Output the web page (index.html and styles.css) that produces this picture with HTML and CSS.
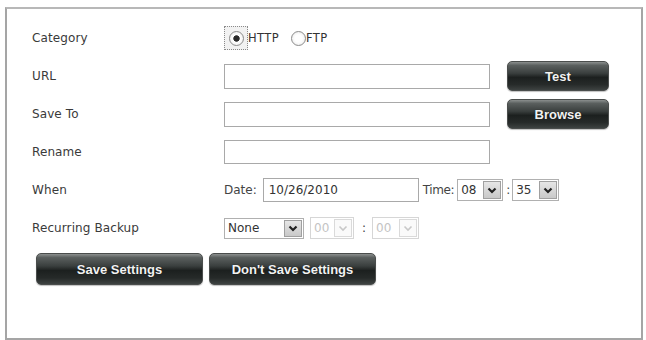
FILE: index.html
```html
<!DOCTYPE html>
<html>
<head>
<meta charset="utf-8">
<link rel="stylesheet" href="styles.css">
</head>
<body>
<div class="panel">
  <div class="form">
    <div class="label">Category</div>
    <div class="ctrl">
      <span class="focusbox"><span class="radio checked"></span></span><span class="rtext">HTTP</span>
      <span class="radio second"></span><span class="rtext">FTP</span>
    </div>

    <div class="label">URL</div>
    <div class="ctrl"><span class="input wide"></span><span class="btn small">Test</span></div>

    <div class="label">Save To</div>
    <div class="ctrl"><span class="input wide"></span><span class="btn small">Browse</span></div>

    <div class="label">Rename</div>
    <div class="ctrl"><span class="input wide short"></span></div>

    <div class="label">When</div>
    <div class="ctrl">
      <span class="txt">Date:</span>
      <span class="input date">10/26/2010</span>
      <span class="txt time">Time:</span>
      <span class="select s46"><span class="val">08</span><span class="arrow"><svg width="10" height="7" viewBox="0 0 10 7"><path d="M1.5 1.5 L5 5 L8.5 1.5" fill="none" stroke="#222" stroke-width="2.2"/></svg></span></span>
      <span class="txt colon">:</span>
      <span class="select s47 tight"><span class="val">35</span><span class="arrow"><svg width="10" height="7" viewBox="0 0 10 7"><path d="M1.5 1.5 L5 5 L8.5 1.5" fill="none" stroke="#222" stroke-width="2.2"/></svg></span></span>
    </div>

    <div class="label">Recurring Backup</div>
    <div class="ctrl">
      <span class="select s80"><span class="val">None</span><span class="arrow"><svg width="10" height="7" viewBox="0 0 10 7"><path d="M1.5 1.5 L5 5 L8.5 1.5" fill="none" stroke="#222" stroke-width="2.2"/></svg></span></span>
      <span class="select s44 disabled"><span class="val">00</span><span class="arrow"><svg width="10" height="7" viewBox="0 0 10 7"><path d="M1.5 1.5 L5 5 L8.5 1.5" fill="none" stroke="#c8c8c8" stroke-width="1.6"/></svg></span></span>
      <span class="txt colon2">:</span>
      <span class="select s47 disabled"><span class="val">00</span><span class="arrow"><svg width="10" height="7" viewBox="0 0 10 7"><path d="M1.5 1.5 L5 5 L8.5 1.5" fill="none" stroke="#c8c8c8" stroke-width="1.6"/></svg></span></span>
    </div>
  </div>
  <div class="actions">
    <span class="btn big">Save Settings</span>
    <span class="btn big">Don't Save Settings</span>
  </div>
</div>
</body>
</html>
```

FILE: styles.css
```css
html, body {
  margin: 0;
  padding: 0;
  background: #ffffff;
}
body {
  width: 646px;
  height: 340px;
  overflow: hidden;
  font-family: "DejaVu Sans", Verdana, sans-serif;
  font-size: 12px;
  color: #3a3a3a;
}
.panel {
  box-sizing: border-box;
  margin: 7px 3px 0 5px;
  width: 638px;
  height: 333px;
  border: 2px solid #a5a5a5;
  border-top-color: #b8b8b8;
  padding: 10px 0 0 25px;
}
.form {
  display: grid;
  grid-template-columns: 192px auto;
  grid-auto-rows: 38px;
}
.label {
  display: flex;
  align-items: center;
  letter-spacing: 0.1px;
}
.ctrl {
  display: flex;
  align-items: center;
}
.focusbox {
  box-sizing: border-box;
  width: 24px;
  height: 24px;
  border: 1px dotted #8a8a8a;
  background: #f2f2f2;
  display: flex;
  align-items: center;
  justify-content: center;
}
.radio {
  box-sizing: border-box;
  width: 15px;
  height: 15px;
  border-radius: 50%;
  border: 1px solid #8c8c8c;
  background: radial-gradient(circle at 50% 50%, #ffffff 40%, #e4e4e4 100%);
  display: inline-block;
}
.radio.checked {
  background: radial-gradient(circle at 50% 50%, #2a2a2a 0 2.8px, #ffffff 3.6px, #e8e8e8 100%);
}
.radio.second {
  margin-left: 12px;
}
.rtext {
  font-size: 11.5px;
  color: #333;
  letter-spacing: 0.4px;
}
.input {
  box-sizing: border-box;
  display: inline-flex;
  align-items: center;
  height: 25px;
  border: 1px solid #a9a9a9;
  background: #fff;
  padding-left: 5px;
  color: #333;
  font-size: 12px;
}
.input.wide {
  width: 266px;
}
.input.short {
  height: 24px;
}
.input.date {
  width: 156px;
  height: 24px;
  margin-left: 6px;
}
.txt {
  color: #444;
}
.txt.time {
  margin-left: 4px;
  letter-spacing: -0.4px;
}
.colon {
  margin: 0 0 0 3px;
}
.colon2 {
  margin: 0 6px 0 8px;
}
.select {
  box-sizing: border-box;
  height: 22px;
  display: inline-flex;
  align-items: stretch;
  border: 1px solid #b0b0b0;
  background: #fff;
  margin-left: 3px;
}
.select.tight {
  margin-left: 2px;
}
.select .val {
  flex: 1;
  display: flex;
  align-items: center;
  padding-left: 3px;
  font-size: 12px;
  color: #333;
}
.select .arrow {
  width: 18px;
  margin: 1px;
  background: linear-gradient(#e6e6e6, #c9c9c9);
  border: 1px solid #a0a0a0;
  display: flex;
  align-items: center;
  justify-content: center;
  box-sizing: border-box;
}
.s46 { width: 46px; }
.s47 { width: 47px; }
.s44 { width: 44px; margin-left: 6px; }
.s80 { width: 80px; margin-left: 0; height: 21px; }
.select.disabled {
  border-color: #d6d6d6;
  margin-left: 6px;
}
.select.disabled .val {
  color: #c4c4c4;
}
.select.disabled .arrow {
  background: #fafafa;
  border-color: #dadada;
}
.s47.disabled { margin-left: 0; }
.btn {
  box-sizing: border-box;
  display: inline-flex;
  align-items: center;
  justify-content: center;
  border-radius: 5px;
  border: 1px solid #4a4d4c;
  background: linear-gradient(#8b8f8e 0%, #5a5f5e 12%, #3a3f3e 40%, #1c201f 55%, #262a29 80%, #3d4241 100%);
  color: #f2f2f2;
  font-family: "Liberation Sans", Arial, sans-serif;
  font-weight: bold;
  font-size: 13px;
  text-shadow: 0 0 1px rgba(0,0,0,0.6);
  box-shadow: 0 1px 1px rgba(0,0,0,0.25);
}
.btn.small {
  width: 102px;
  height: 30px;
  margin-left: 17px;
}
.actions {
  display: flex;
  gap: 6px;
  margin-top: 6px;
  padding-left: 4px;
}
.btn.big {
  width: 167px;
  height: 32px;
}
```
